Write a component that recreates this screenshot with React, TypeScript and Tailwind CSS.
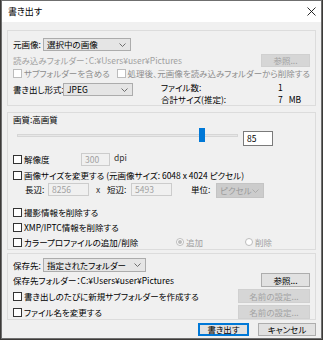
import type { ReactNode } from 'react';

const Chevron = ({ color = '#606060' }: { color?: string }) => (
  <svg width="7" height="4" viewBox="0 0 7 4" className="shrink-0">
    <path d="M0.5 0.5 L3.5 3.5 L6.5 0.5" fill="none" stroke={color} strokeWidth="0.9" />
  </svg>
);

function Check({ label, disabled, className = '' }: { label: ReactNode; disabled?: boolean; className?: string }) {
  return (
    <div className={`flex items-center ${className}`}>
      <span
        className={`w-[9px] h-[9px] border bg-white shrink-0 ${disabled ? 'border-[#bcbcbc]' : 'border-[#333333]'}`}
      />
      <span className={`ml-[2px] whitespace-nowrap ${disabled ? 'text-[#8d8d8d]' : 'text-black'}`}>{label}</span>
    </div>
  );
}

function Select({ value, width, disabled }: { value: string; width: string; disabled?: boolean }) {
  return (
    <div
      className={`${width} h-full flex items-center justify-between pl-[3px] pr-[4px] border ${
        disabled ? 'bg-[#cccccc] border-[#c4c4c4] text-[#9a9a9a]' : 'bg-[#e5e5e5] border-[#acacac] text-black'
      }`}
    >
      <span className="whitespace-nowrap">{value}</span>
      <Chevron color={disabled ? '#a8a8a8' : '#606060'} />
    </div>
  );
}

function Button({ label, width, disabled, primary }: { label: string; width: string; disabled?: boolean; primary?: boolean }) {
  const tone = disabled
    ? 'bg-[#d6d6d6] border-[#d0d0d0] text-[#a3a3a3]'
    : primary
      ? 'bg-[#e1e1e1] border-[#0078d7] text-black shadow-[inset_0_0_0_1px_#0078d7]'
      : 'bg-[#e1e1e1] border-[#adadad] text-black';
  return (
    <div className={`${width} h-full flex items-center justify-center border ${tone} whitespace-nowrap`}>{label}</div>
  );
}

function Field({ value, width, disabled }: { value: string; width: string; disabled?: boolean }) {
  return (
    <div
      className={`${width} h-full flex items-center pl-[3px] border ${
        disabled ? 'bg-[#f0f0f0] border-[#cccccc] text-[#a0a0a0]' : 'bg-white border-[#7a7a7a] text-black'
      }`}
    >
      {value}
    </div>
  );
}

export default function App() {
  return (
    <div
      className="w-[323px] h-[340px] bg-[#3c3a38] px-px pb-px text-[8.5px] leading-none text-black whitespace-nowrap [font-feature-settings:'palt']"
      style={{ fontFamily: '"Noto Sans CJK JP", "Noto Sans", sans-serif' }}
    >
      <div className="h-[339px] border border-[#6f6f6f] bg-[#f0f0f0] flex flex-col">
        {/* Title bar */}
        <div className="h-[21px] bg-white flex items-center justify-between pl-[6px] pr-[5px] shrink-0">
          <span className="text-[9px]">書き出す</span>
          <svg width="9" height="9" viewBox="0 0 9 9">
            <path d="M0.5 0.5 L8.5 8.5 M8.5 0.5 L0.5 8.5" stroke="#111" strokeWidth="0.9" />
          </svg>
        </div>

        {/* Source */}
        <div className="mt-[8px] mx-[5px] border border-[#dcdcdc] pl-[5px] pr-[5px] pt-[7px] flex flex-col">
          <div className="h-[13px] flex items-center">
            <span className="w-[30px]">元画像:</span>
            <Select value="選択中の画像" width="w-[88px]" />
          </div>
          <div className="mt-[3px] h-[13px] flex items-center justify-between">
            <span className="text-[#a0a0a0]">読み込みフォルダー：C:¥Users¥user¥Pictures</span>
            <Button label="参照..." width="w-[49px]" disabled />
          </div>
          <div className="h-[12px] flex items-center">
            <Check label="サブフォルダーを含める" disabled className="w-[126px]" />
            <Check label="処理後、元画像を読み込みフォルダーから削除する" disabled />
          </div>
          <div className="mt-[2px] h-[24px] flex items-start">
            <span className="w-[50px] mt-[2px] h-[13px] flex items-center">書き出し形式:</span>
            <div className="mt-[2px] h-[13px]">
              <Select value="JPEG" width="w-[70px]" />
            </div>
            <div className="ml-[28px] flex flex-col">
              <div className="h-[12px] flex items-center">
                <span className="w-[117px]">ファイル数:</span>
                <span>1</span>
              </div>
              <div className="h-[12px] flex items-center">
                <span className="w-[117px]">合計サイズ(推定):</span>
                <span>7</span>
                <span className="ml-[6px]">MB</span>
              </div>
            </div>
          </div>
        </div>

        {/* Quality / size / metadata */}
        <div className="mt-[6px] mx-[5px] border border-[#dcdcdc] pl-[5px] pr-[5px] pt-px flex flex-col">
          <div className="h-[11px] flex items-center">画質:高画質</div>
          <div className="mt-[3px] h-[18px] flex items-start">
            <div className="relative ml-[4px] w-[221px] h-[14px] flex items-center">
              <div className="w-full h-[3px] bg-[#e7e7e7] border border-[#d6d6d6]" />
              <div className="absolute left-[182px] top-0 w-[6px] h-[14px] bg-[#0078d7]" />
            </div>
            <div className="ml-[5px] mt-[3px] h-[15px]">
              <Field value="85" width="w-[30px]" />
            </div>
          </div>
          <div className="mt-[7px] h-[13px] flex items-center">
            <Check label="解像度" className="w-[68px]" />
            <Field value="300" width="w-[29px]" disabled />
            <span className="ml-[4px] self-start text-[#333]">dpi</span>
          </div>
          <div className="mt-[3px] h-[12px] flex items-center">
            <Check label="画像サイズを変更する (元画像サイズ: 6048 x 4024 ピクセル)" />
          </div>
          <div className="mt-[2px] h-[13px] flex items-start">
            <span className="ml-[12px] w-[23px] h-[13px] flex items-center">長辺:</span>
            <Field value="8256" width="w-[41px]" disabled />
            <span className="w-[18px] h-[13px] flex items-center justify-center text-[#333]">x</span>
            <span className="w-[24px] h-[13px] flex items-center">短辺:</span>
            <Field value="5493" width="w-[41px]" disabled />
            <span className="ml-[19px] w-[25px] h-[13px] flex items-center">単位:</span>
            <div className="h-[15px]">
              <Select value="ピクセル" width="w-[48px]" disabled />
            </div>
          </div>
          <div className="mt-[9px] h-[15px] flex items-center">
            <Check label="撮影情報を削除する" />
          </div>
          <div className="h-[15px] flex items-center">
            <Check label="XMP/IPTC情報を削除する" />
          </div>
          <div className="h-[14px] flex items-center">
            <Check label="カラープロファイルの追加/削除" className="w-[163px]" />
            <div className="flex items-center text-[#a0a0a0]">
              <span className="w-[8px] h-[8px] rounded-full border border-[#bcbcbc] bg-white flex items-center justify-center">
                <span className="w-[4px] h-[4px] rounded-full bg-[#bcbcbc]" />
              </span>
              <span className="ml-[2px] w-[59px]">追加</span>
              <span className="w-[8px] h-[8px] rounded-full border border-[#bcbcbc] bg-white" />
              <span className="ml-[2px]">削除</span>
            </div>
          </div>
        </div>

        {/* Destination */}
        <div className="mt-[3px] mx-[5px] border border-[#dcdcdc] pl-[5px] pr-[5px] pt-[4px] flex flex-col">
          <div className="h-[14px] flex items-center">
            <span className="w-[30px]">保存先:</span>
            <Select value="指定されたフォルダー" width="w-[103px]" />
          </div>
          <div className="mt-px h-[14px] flex items-center justify-between">
            <span>保存先フォルダー：C:¥Users¥user¥Pictures</span>
            <Button label="参照..." width="w-[49px]" />
          </div>
          <div className="mt-[2px] h-[14px] flex items-center justify-between">
            <Check label="書き出しのたびに新規サブフォルダーを作成する" />
            <Button label="名前の設定..." width="w-[72px]" disabled />
          </div>
          <div className="mt-[2px] h-[14px] flex items-center justify-between">
            <Check label="ファイル名を変更する" />
            <Button label="名前の設定..." width="w-[72px]" disabled />
          </div>
        </div>

        {/* Footer buttons */}
        <div className="mt-[3px] h-[13px] flex justify-end gap-[9px] pr-[5px]">
          <Button label="書き出す" width="w-[51px]" primary />
          <Button label="キャンセル" width="w-[58px]" />
        </div>
      </div>
    </div>
  );
}
